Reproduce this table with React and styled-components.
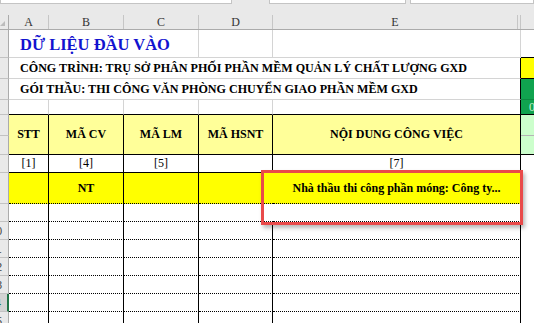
import React from 'react';
import styled, { createGlobalStyle } from 'styled-components';

const GlobalStyle = createGlobalStyle`
    body {
        margin: 0;
        background: #fff;
        font-family: "Liberation Serif", "Times New Roman", serif;
    }
`;

const GRID = '1px solid #d4d4d4';
const SOLID = '1px solid #000';
const DOT = '1px dotted #000';

const W = { rh: 9, A: 40, B: 75, C: 75, D: 74, E: 248, F: 13 };

const Sheet = styled.div`
    position: relative;
    width: 534px;
    height: 323px;
    overflow: hidden;
    background: #fff;
`;

const TopStrip = styled.div`
    display: flex;
    align-items: flex-start;
    height: 15px;
    background: #e9e9e9;
`;

const FormulaBox = styled.div`
    box-sizing: border-box;
    width: ${props => props.$w}px;
    flex: ${props => props.$grow ? 1 : 'none'};
    margin-left: ${props => props.$gap || 0}px;
    height: 4px;
    background: #fff;
    border: 1px solid #c4c4c4;
    border-top: none;
`;

const ColHeaderRow = styled.div`
    display: flex;
    height: 15px;
    box-sizing: border-box;
    background: #e9e9e9;
    border-bottom: 1px solid #ababab;
`;

const Corner = styled.div`
    box-sizing: border-box;
    width: ${W.rh}px;
    display: flex;
    justify-content: flex-end;
    align-items: flex-end;
    padding: 0 3px 3px 0;
    border-right: 1px solid #ababab;
`;

const CornerMark = styled.div`
    width: 0;
    height: 0;
    border-left: 5px solid transparent;
    border-bottom: 5px solid #bcbcbc;
`;

const ColHead = styled.div`
    box-sizing: border-box;
    width: ${props => props.$w}px;
    flex: ${props => props.$grow ? 1 : 'none'};
    display: flex;
    align-items: center;
    justify-content: center;
    border-right: ${props => props.$noLine ? 'none' : '1px solid #c6c6c6'};
    font-size: 12px;
    color: #333;
`;

const Body = styled.div`
    display: flex;
`;

const RowHeads = styled.div`
    width: ${W.rh}px;
    display: flex;
    flex-direction: column;
`;

// the row header is cut by the screenshot, only the last digit peeks out
const RowHead = styled.div`
    box-sizing: border-box;
    height: ${props => props.$h}px;
    display: flex;
    justify-content: flex-end;
    align-items: center;
    overflow: hidden;
    background: ${props => props.$selected ? '#d3d3d3' : '#e9e9e9'};
    border-bottom: 1px solid #c2c2c2;
    border-right: ${props => props.$selected ? '2px solid #217346' : '1px solid #ababab'};
`;

const RowNum = styled.span`
    flex: none;
    width: 24px;
    text-align: center;
    font-family: "Liberation Sans", Arial, sans-serif;
    font-size: 11px;
    color: ${props => props.$selected ? '#217346' : '#444'};
`;

const Grid = styled.div`
    display: flex;
    flex-direction: column;
    width: ${534 - W.rh}px;
`;

const Row = styled.div`
    display: flex;
    height: ${props => props.$h}px;
`;

const Cell = styled.div`
    box-sizing: border-box;
    width: ${props => props.$w}px;
    flex: none;
    display: flex;
    align-items: center;
    justify-content: ${props => props.$align || 'center'};
    padding-left: ${props => props.$indent || 0}px;
    background: ${props => props.$bg || '#fff'};
    border-right: ${props => props.$right || 'none'};
    border-bottom: ${props => props.$bottom || 'none'};
    font-size: 12px;
    font-weight: ${props => props.$bold ? 700 : 400};
    color: ${props => props.$color || '#000'};
    white-space: nowrap;
    overflow: hidden;
`;

const Title = styled.span`
    font-size: 16.5px;
    font-weight: 700;
    color: #1212cf;
    padding-top: 2px;
`;

const Subtitle = styled.span`
    font-size: 12.1px;
    font-weight: 700;
    padding-top: 1px;
`;

const SplitCell = styled.div`
    box-sizing: border-box;
    width: ${W.F}px;
    display: flex;
    flex-direction: column;
    border-bottom: ${SOLID};
`;

const SplitPart = styled.div`
    box-sizing: border-box;
    height: ${props => props.$h}px;
    background: #ccffcc;
    border-bottom: ${props => props.$line ? '1px solid #b5b5b5' : 'none'};
`;

const Callout = styled.div`
    position: absolute;
    left: 261px;
    top: 170px;
    width: 262px;
    height: 55px;
    box-sizing: border-box;
    border: 3.5px solid #e94a4a;
    box-shadow: 2px 3px 4px rgba(0, 0, 0, 0.28);
`;

const rowHeights = [28, 21, 21, 15, 21, 19, 18, 31, 18, 18, 18, 18, 18, 18, 18];
const tableCols = ['A', 'B', 'C', 'D', 'E'];

const headers = ['STT', 'MÃ CV', 'MÃ LM', 'MÃ HSNT', 'NỘI DUNG CÔNG VIỆC'];
const indexes = ['[1]', '[4]', '[5]', '', '[7]'];

const TableRow = ({ h, bg, bottom, bold, texts = [], openD }) => (
    <Row $h={h}>
        {tableCols.map((c, i) => (
            <Cell
                key={c}
                $w={W[c]}
                $bg={bg}
                $bold={bold}
                $right={openD && c === 'D' ? 'none' : SOLID}
                $bottom={bottom}>
                {texts[i]}
            </Cell>
        ))}
        <Cell $w={W.F} />
    </Row>
);

const App = () => {
    return (
        <Sheet>
            <GlobalStyle />
            <TopStrip>
                <FormulaBox $w={232} />
                <FormulaBox $w={137} $gap={37} />
                <FormulaBox $grow $gap={4} />
            </TopStrip>

            <ColHeaderRow>
                <Corner><CornerMark /></Corner>
                <ColHead $w={W.A}>A</ColHead>
                <ColHead $w={W.B}>B</ColHead>
                <ColHead $w={W.C}>C</ColHead>
                <ColHead $w={W.D}>D</ColHead>
                <ColHead $w={W.E - 3}>E</ColHead>
                <ColHead $w={3} />
                <ColHead $grow $noLine />
            </ColHeaderRow>

            <Body>
                <RowHeads>
                    {[28, 21, 21, 15, 21, 19, 18, 31, 18].map((h, i) => (
                        <RowHead key={i} $h={h} />
                    ))}
                    {[10, 11, 12, 13, 14, 15].map(n => (
                        <RowHead key={n} $h={18} $selected={n === 14}>
                            <RowNum $selected={n === 14}>{n}</RowNum>
                        </RowHead>
                    ))}
                </RowHeads>

                <Grid>
                    <Row $h={rowHeights[0]}>
                        <Cell $w={W.A + W.B + W.C} $align="flex-start" $indent={11} $right={GRID} $bottom={GRID}>
                            <Title>DỮ LIỆU ĐẦU VÀO</Title>
                        </Cell>
                        <Cell $w={W.D} $right={GRID} $bottom={GRID} />
                        <Cell $w={W.E} $right={GRID} $bottom={GRID} />
                        <Cell $w={W.F} $bottom={SOLID} />
                    </Row>

                    <Row $h={rowHeights[1]}>
                        <Cell $w={W.A + W.B + W.C + W.D + W.E} $align="flex-start" $indent={11} $right={SOLID} $bottom={GRID}>
                            <Subtitle>CÔNG TRÌNH: TRỤ SỞ PHÂN PHỐI PHẦN MỀM QUẢN LÝ CHẤT LƯỢNG GXD</Subtitle>
                        </Cell>
                        <Cell $w={W.F} $bg="#ffff00" $bottom={SOLID} />
                    </Row>

                    <Row $h={rowHeights[2]}>
                        <Cell $w={W.A + W.B + W.C + W.D + W.E} $align="flex-start" $indent={11} $right={SOLID} $bottom={GRID}>
                            <Subtitle>GÓI THẦU: THI CÔNG VĂN PHÒNG CHUYỂN GIAO PHẦN MỀM GXD</Subtitle>
                        </Cell>
                        <Cell $w={W.F} $bg="#10a34f" $bottom="1px solid #0b8a41" />
                    </Row>

                    <Row $h={rowHeights[3]}>
                        <Cell $w={W.A} $right={GRID} $bottom={SOLID} />
                        <Cell $w={W.B} $right={GRID} $bottom={SOLID} />
                        <Cell $w={W.C} $right={GRID} $bottom={SOLID} />
                        <Cell $w={W.D} $right={GRID} $bottom={SOLID} />
                        <Cell $w={W.E} $right={SOLID} $bottom={SOLID} />
                        <Cell $w={W.F} $bg="#10a34f" $bottom={SOLID} $align="flex-start" $indent={8} $color="#c8f0d2">0</Cell>
                    </Row>

                    <Row $h={rowHeights[4] + rowHeights[5]}>
                        {tableCols.map((c, i) => (
                            <Cell key={c} $w={W[c]} $bg="#ffff99" $bold $right={SOLID} $bottom={SOLID}>
                                {headers[i]}
                            </Cell>
                        ))}
                        <SplitCell>
                            <SplitPart $h={21} $line />
                            <SplitPart $h={18} />
                        </SplitCell>
                    </Row>

                    <TableRow h={rowHeights[6]} bottom={SOLID} texts={indexes} />
                    <TableRow
                        h={rowHeights[7]}
                        bg="#ffff00"
                        bold
                        bottom={DOT}
                        openD
                        texts={['', 'NT', '', '', 'Nhà thầu thi công phần móng: Công ty...']} />
                    <TableRow h={rowHeights[8]} bottom={DOT} openD />
                    {rowHeights.slice(9).map((h, i) => (
                        <TableRow key={i} h={h} bottom={DOT} />
                    ))}
                </Grid>
            </Body>

            <Callout />
        </Sheet>
    );
};

export default App;
